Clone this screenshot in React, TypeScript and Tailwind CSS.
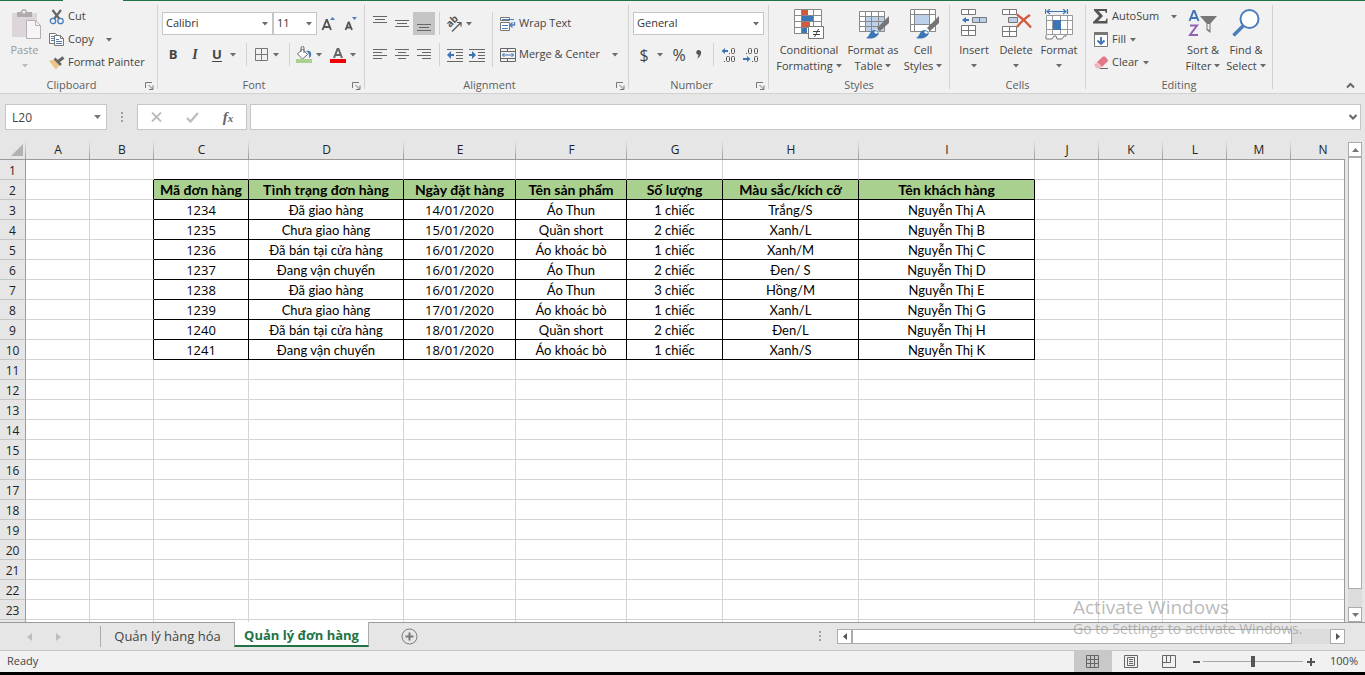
import { useState } from 'react'
import type { ReactNode } from 'react'
import clsx from 'clsx'

/* ── Sheet data ─────────────────────────────────────────────── */

const columns = [
  { name: 'A', width: 64 },
  { name: 'B', width: 64 },
  { name: 'C', width: 95 },
  { name: 'D', width: 155 },
  { name: 'E', width: 112 },
  { name: 'F', width: 111 },
  { name: 'G', width: 96 },
  { name: 'H', width: 136 },
  { name: 'I', width: 176 },
  { name: 'J', width: 64 },
  { name: 'K', width: 64 },
  { name: 'L', width: 64 },
  { name: 'M', width: 64 },
  { name: 'N', width: 64 },
]

const FIRST_COL = 2
const LAST_COL = 8
const FIRST_ROW = 2
const ROW_COUNT = 23

const table = [
  ['Mã đơn hàng', 'Tình trạng đơn hàng', 'Ngày đặt hàng', 'Tên sản phẩm', 'Số lượng', 'Màu sắc/kích cỡ', 'Tên khách hàng'],
  ['1234', 'Đã giao hàng', '14/01/2020', 'Áo Thun', '1 chiếc', 'Trắng/S', 'Nguyễn Thị A'],
  ['1235', 'Chưa giao hàng', '15/01/2020', 'Quần short', '2 chiếc', 'Xanh/L', 'Nguyễn Thị B'],
  ['1236', 'Đã bán tại cửa hàng', '16/01/2020', 'Áo khoác bò', '1 chiếc', 'Xanh/M', 'Nguyễn Thị C'],
  ['1237', 'Đang vận chuyển', '16/01/2020', 'Áo Thun', '2 chiếc', 'Đen/ S', 'Nguyễn Thị D'],
  ['1238', 'Đã giao hàng', '16/01/2020', 'Áo Thun', '3 chiếc', 'Hồng/M', 'Nguyễn Thị E'],
  ['1239', 'Chưa giao hàng', '17/01/2020', 'Áo khoác bò', '1 chiếc', 'Xanh/L', 'Nguyễn Thị G'],
  ['1240', 'Đã bán tại cửa hàng', '18/01/2020', 'Quần short', '2 chiếc', 'Đen/L', 'Nguyễn Thị H'],
  ['1241', 'Đang vận chuyển', '18/01/2020', 'Áo khoác bò', '1 chiếc', 'Xanh/S', 'Nguyễn Thị K'],
]

const LAST_ROW = FIRST_ROW + table.length - 1

/* ── Small shared pieces ────────────────────────────────────── */

function Caret({ className = 'text-[#6a6a6a]' }: { className?: string }) {
  return (
    <svg width="6" height="4" viewBox="0 0 6 4" className={clsx('shrink-0', className)} aria-hidden>
      <path d="M0 0h6L3 3.500z" fill="currentColor" />
    </svg>
  )
}

function CaretButton({ label }: { label: string }) {
  return (
    <button aria-label={label} className="flex h-full w-3.5 items-center pl-0.5">
      <Caret />
    </button>
  )
}

function Divider() {
  return <div className="mx-1 h-full w-px shrink-0 bg-[#d2d2d2]" />
}

function Group({ title, launcher, className, children }: {
  title: string
  launcher?: boolean
  className?: string
  children: ReactNode
}) {
  return (
    <>
      <section className={clsx('flex shrink-0 flex-col', className)}>
        <div className="flex h-[76px]">{children}</div>
        <div className="flex h-4 items-center">
          <span className="flex-1 text-center leading-4 text-[#5f5f5f]">{title}</span>
          {launcher && (
            <button aria-label={`${title} settings`} className="mr-0.5 flex w-3 justify-center">
              <svg width="9" height="9" viewBox="0 0 9 9" fill="none" stroke="#777" aria-hidden>
                <path d="M.5 7V1.500H7" />
                <path d="M3.500 4l4 4M8 4.500v4H4" />
              </svg>
            </button>
          )}
        </div>
      </section>
      <div className="my-1 w-px shrink-0 bg-[#d2d2d2]" />
    </>
  )
}

function IconButton({ label, active, wide, children }: {
  label: string
  active?: boolean
  wide?: boolean
  children: ReactNode
}) {
  return (
    <button
      aria-label={label}
      className={clsx(
        'flex h-[23px] shrink-0 items-center justify-center',
        wide ? 'w-[22px]' : 'w-5',
        active && 'bg-[#c5c5c5]',
      )}
    >
      {children}
    </button>
  )
}

function TextButton({ icon, label, caret, far }: { icon: ReactNode; label: string; caret?: boolean; far?: boolean }) {
  return (
    <button className="flex h-[23px] items-center whitespace-nowrap">
      <span className="mr-[3px] flex w-4 justify-center">{icon}</span>
      {label}
      {caret && <Caret className={clsx('text-[#6a6a6a]', far ? 'ml-3' : 'ml-1')} />}
    </button>
  )
}

function BigButton({ icon, lines, className, disabled }: {
  icon: ReactNode
  lines: string[]
  className?: string
  disabled?: boolean
}) {
  return (
    <button
      disabled={disabled}
      className={clsx(
        'flex shrink-0 flex-col items-center pt-2 leading-4 whitespace-nowrap',
        disabled && 'text-[#999]',
        className,
      )}
    >
      <span className="flex h-[33px] items-start">{icon}</span>
      <span>{lines[0]}</span>
      <span className="flex h-4 items-center gap-[3px]">
        {lines[1]}
        <Caret className={disabled ? 'text-[#bdbdbd]' : 'text-[#6a6a6a]'} />
      </span>
    </button>
  )
}

function Combo({ label, value, className }: { label: string; value: string; className: string }) {
  return (
    <div className={clsx('relative h-[23px] shrink-0', className)}>
      <select
        aria-label={label}
        defaultValue={value}
        className="h-full w-full appearance-none border border-[#c6c6c6] bg-white pl-[3px] text-[#333] outline-none"
      >
        <option>{value}</option>
      </select>
      <span className="pointer-events-none absolute inset-y-0 right-[5px] flex items-center">
        <Caret />
      </span>
    </div>
  )
}

/* ── Icons ──────────────────────────────────────────────────── */

const PasteIcon = () => (
  <svg width="33" height="31" viewBox="-4 0 33 31" aria-hidden>
    <path d="M0 4h25v24H0z" fill="#dcd6da" />
    <path d="M5 3h4c0-4 6-4 6 0h5v5H5z" fill="#b0abae" />
    <circle cx="12" cy="3" r="1.500" fill="#f1f1f1" />
    <path d="M14.500 11.500h9l5 5v13h-14z" fill="#f7f4f7" stroke="#b5b0b4" />
    <path d="M23.500 11.500v5h5" fill="none" stroke="#b5b0b4" />
  </svg>
)

const CutIcon = () => (
  <svg width="16" height="16" viewBox="0 0 16 16" fill="none" aria-hidden>
    <path d="M3.500 1l7 9M12 1L5 10" stroke="#666" strokeWidth="2.200" />
    <circle cx="4" cy="12" r="2.700" stroke="#4a7ebb" strokeWidth="1.300" />
    <circle cx="11.500" cy="12" r="2.700" stroke="#4a7ebb" strokeWidth="1.300" />
  </svg>
)

const CopyIcon = () => (
  <svg width="16" height="15" viewBox="0 0 16 15" aria-hidden>
    <path d="M.5 1.500h6l2 2v8h-8z" fill="#fff" stroke="#777" />
    <path d="M2 4.500h4M2 6.500h3M2 8.500h3" stroke="#4a7ebb" />
    <path d="M5.500 3.500h6l3 3v7h-9z" fill="#fff" stroke="#777" />
    <path d="M11.500 3.500v3h3" fill="none" stroke="#777" />
    <path d="M7 7.500h3M7 9.500h6M7 11.500h6" stroke="#4a7ebb" />
  </svg>
)

const PainterIcon = () => (
  <svg width="16" height="14" viewBox="0 0 16 14" aria-hidden>
    <path d="M0 5l5-1.500L10.500 9 7 13.500z" fill="#ecc585" />
    <path d="M5.500 2.500l6.500 6.500" stroke="#666" strokeWidth="2.500" />
    <path d="M9 5.500l5.500-4" stroke="#666" strokeWidth="3" />
  </svg>
)

const FontSizeIcon = ({ up }: { up?: boolean }) => (
  <svg width="15" height="16" viewBox="0 0 15 16" aria-hidden>
    {up ? (
      <path d="M1.500 14L5.500 4h.5l4 10M3 11h5.500" fill="none" stroke="#555" strokeWidth="1.900" />
    ) : (
      <path d="M2.500 14L5.500 6.500h.5L9 14M3.500 11.500H8" fill="none" stroke="#555" strokeWidth="1.800" />
    )}
    <path d={up ? 'M9 4l2.500-3L14 4z' : 'M9 1h5l-2.500 3z'} fill="#4a7ebb" />
  </svg>
)

const BordersIcon = () => (
  <svg width="13" height="13" viewBox="0 0 13 13" fill="none" stroke="#777" aria-hidden>
    <path d="M.5.5h12v12H.5zM6.500.5v12M.5 6.500h12" />
  </svg>
)

const FillColorIcon = () => (
  <svg width="18" height="17" viewBox="0 0 18 17" aria-hidden>
    <path d="M7.500 3l5 5.500-5 4.500-5-5z" fill="#fff" stroke="#666" />
    <path d="M6 6V2a1.500 1.500 0 0 1 3 0v5" fill="none" stroke="#666" />
    <path d="M11 5c4-1 6 1 5 5-.5 1.500-2 2-2 2 .5-3 0-5-3-7z" fill="#4a7ebb" />
    <path d="M1 13h16v4H1z" fill="#a9d08e" />
  </svg>
)

const FontColorIcon = () => (
  <svg width="16" height="17" viewBox="0 0 16 17" aria-hidden>
    <path d="M4 12l3.500-9h1L12 12M5 9h6" fill="none" stroke="#666" strokeWidth="2" />
    <path d="M0 13h16v4H0z" fill="#f00000" />
  </svg>
)

function LinesIcon({ d }: { d: string }) {
  return (
    <svg width="14" height="15" viewBox="0 0 14 15" stroke="#666" aria-hidden>
      <path d={d} />
    </svg>
  )
}

const OrientationIcon = () => (
  <svg width="20" height="21" viewBox="0 0 20 21" aria-hidden>
    <text x="6" y="15" fontSize="10" fontWeight="700" fill="#555" transform="rotate(-45 6 15)">ab</text>
    <path d="M8 18.500L17 9.500M13 9.500h4v4" fill="none" stroke="#555" strokeWidth="1.200" />
  </svg>
)

const IndentIcon = ({ flip }: { flip?: boolean }) => (
  <svg width="16" height="14" viewBox="0 0 16 14" aria-hidden>
    <path d="M0 1.500h16M9 4.500h7M9 7.500h7M9 10.500h7M0 13.500h16" stroke="#666" />
    <path
      d={flip ? 'M0 6h3V3l4 4-4 4V8H0z' : 'M7 6H4V3L0 7l4 4V8h3z'}
      fill="#3c76b5"
    />
  </svg>
)

const WrapIcon = () => (
  <svg width="16" height="16" viewBox="0 0 16 16" fill="none" aria-hidden>
    <path d="M.5 1.500h9v3h-9zM.5 6.500h9v8h-9z" fill="#fff" stroke="#777" />
    <path d="M2 3.500h12M2 9.500h6M2 12.500h6" stroke="#4a7ebb" />
    <path d="M14.500 6v3h-4M12.500 6.500L10 9l2.500 2.500" stroke="#4a7ebb" strokeWidth="1.300" />
  </svg>
)

const MergeIcon = () => (
  <svg width="16" height="16" viewBox="0 0 16 16" fill="none" aria-hidden>
    <path d="M.5 1.500h15v13H.5zM.5 4.500h15M.5 11.500h15M7.500 1v3M7.500 12v2" stroke="#666" />
    <path d="M2.500 8h11M4.500 6L2.500 8l2 2M11.500 6l2 2-2 2" stroke="#3c76b5" />
  </svg>
)

const DecimalIcon = ({ less }: { less?: boolean }) => (
  <svg width="16" height="16" viewBox="0 0 16 16" aria-hidden>
    <g fill="none" stroke="#555">
      {less ? (
        <>
          <rect x="5.500" y="1.500" width="3" height="5" rx="1" />
          <rect x="11.500" y="1.500" width="3" height="5" rx="1" />
          <rect x="11.500" y="9.500" width="3" height="5" rx="1" />
          <path d="M3 6.500h1M9 14.500h1" />
        </>
      ) : (
        <>
          <rect x="10.500" y="1.500" width="3" height="5" rx="1" />
          <rect x="5.500" y="9.500" width="3" height="5" rx="1" />
          <rect x="10.500" y="9.500" width="3" height="5" rx="1" />
          <path d="M8 6.500h1M3 14.500h1" />
        </>
      )}
    </g>
    <path d={less ? 'M0 11h4V9l3.500 3L4 15v-2H0z' : 'M7 3H4V1L.5 4 4 7V5h3z'} fill="#3c76b5" />
  </svg>
)

const ConditionalIcon = () => (
  <svg width="30" height="30" viewBox="0 0 30 30" aria-hidden>
    <path d="M.5.5h27v24H.5z" fill="#fff" />
    <path d="M8 1h6v5H8zM8 13h8v5H8z" fill="#d2593e" />
    <path d="M8 7h11v5H8zM8 19h5v5H8z" fill="#3c76b5" />
    <path d="M.5.5h27v24H.5zM7.500 0v24M19.500 0v24M0 6.500h27M0 12.500h27M0 18.500h27" fill="none" stroke="#888" />
    <path d="M14.500 17.500h15v12h-15z" fill="#fff" stroke="#777" />
    <path d="M19 22.500h7M19 25.500h7M24.500 20l-4 8" stroke="#444" fill="none" />
  </svg>
)

const BrushShape = () => (
  <>
    <path d="M30 7v7l-9 8-3-3z" fill="#757575" />
    <path d="M17 20l3.500 3.500-2 1.500-3-3.500z" fill="#fff" />
    <path d="M7 29c4-1 3-8 9-8 4 1 5 4 2 6-3 3-8 3-11 2z" fill="#3c76b5" />
    <path d="M15 23c1-1 3-1 4 1-1 1-3 1-4-1z" fill="#fff" />
  </>
)

const TableStyleIcon = () => (
  <svg width="32" height="31" viewBox="-2 0 32 31" aria-hidden>
    <path d="M.5 2.500h25v20H.5z" fill="#fff" />
    <path d="M7 8h18v14H7z" fill="#bdd0e9" />
    <path d="M.5 2.500h25v20H.5zM6.500 2v20M12.500 2v20M19.500 2v20M0 7.500h25M0 12.500h25M0 17.500h25" fill="none" stroke="#888" />
    <BrushShape />
  </svg>
)

const CellStyleIcon = () => (
  <svg width="32" height="31" viewBox="-2 0 32 31" aria-hidden>
    <path d="M1.500.5h25v22h-25z" fill="#fff" />
    <path d="M6 6h15v9H6z" fill="#bdd0e9" />
    <path d="M1.500.5h25v22h-25zM5.500 0v22M20.500 0v22M1 5.500h25M1 15.500h25" fill="none" stroke="#888" />
    <BrushShape />
  </svg>
)

const InsertIcon = () => (
  <svg width="27" height="28" viewBox="0 0 27 28" aria-hidden>
    <path d="M.5.5h14v5H.5zM.5 16.500h14v10H.5zM7.500.5v5M7.500 16.500v10M.5 21.500h14" fill="#fff" stroke="#777" />
    <path d="M11.500 8.500h14v5h-14zM18.500 8.500v5" fill="#bdd0e9" stroke="#777" />
    <path d="M8 10H5V8l-4 3 4 3v-2h3z" fill="#3c76b5" />
  </svg>
)

const DeleteIcon = () => (
  <svg width="32" height="28" viewBox="-2 0 32 28" aria-hidden>
    <path d="M.5.5h14v5H.5zM.5 17.500h14v10H.5zM7.500.5v5M7.500 17.500v10M.5 22.500h14" fill="#fff" stroke="#777" />
    <path d="M6.500 8.500h9v5h-9z" fill="#bdd0e9" stroke="#777" />
    <path d="M15 5.500c4 3 9 7 14 13M28 6c-5 3-9 7-13 12" fill="none" stroke="#d2593e" strokeWidth="2.200" />
  </svg>
)

const FormatIcon = () => (
  <svg width="29" height="31" viewBox="0 0 29 31" aria-hidden>
    <path d="M.5 0v5M22.500 0v5M2 2.500h19M5 0L2 2.500 5 5M18 0l3 2.500L18 5" fill="none" stroke="#3c76b5" strokeWidth="1.200" />
    <path d="M1.500 6.500h26v19h-26z" fill="#fff" />
    <path d="M1.500 6.500h26v19h-26zM7.500 6v20M15.500 6v20M22.500 6v20M1 11.500h26M1 20.500h26" fill="none" stroke="#999" />
    <path d="M8 11h8v10H8z" fill="#3c76b5" />
    <path d="M1 26v4h6l2-3h2l1 3h5l2-3h2v-1" fill="#fff" stroke="#777" />
  </svg>
)

const SumIcon = () => (
  <svg width="16" height="16" viewBox="0 0 16 16" aria-hidden>
    <path d="M1 0h13v4h-1l-1-2H5.500L10 7l-5 5h7.500l1-2.500h1V14.500H0V13l6-6-5-5.500z" fill="#555" />
  </svg>
)

const FillDownIcon = () => (
  <svg width="15" height="16" viewBox="0 0 15 16" aria-hidden>
    <path d="M.5 1.500h13v13H.5z" fill="#fff" stroke="#777" />
    <path d="M0 0h14v3H0z" fill="#777" />
    <path d="M7 5v7M3.500 8.500L7 12l3.500-3.500" fill="none" stroke="#3c76b5" strokeWidth="1.900" />
  </svg>
)

const EraserIcon = () => (
  <svg width="15" height="14" viewBox="0 0 15 14" aria-hidden>
    <path d="M3 6l6-5.500h2L14 4v1l-6 6z" fill="#e4788a" />
    <path d="M2.500 6.500L7.500 11l-2 1.500H3L.5 10V8.500z" fill="#f0b4be" />
    <path d="M6 12.500h8" stroke="#666" />
  </svg>
)

const SortFilterIcon = () => (
  <svg width="30" height="29" viewBox="0 0 30 29" fill="none" aria-hidden>
    <path d="M1.500 12L5.500 2h1l4 10M3 9h6.500" stroke="#3c76b5" strokeWidth="2" />
    <path d="M2 16.500h7L2 26h8" stroke="#9263b5" strokeWidth="2" />
    <path d="M12 7h17l-6.500 7.500V24l-4-3v-6.500z" fill="#777" />
    <path d="M19.500 15h2v6l-2-1z" fill="#f1f1f1" />
  </svg>
)

const FindIcon = () => (
  <svg width="28" height="28" viewBox="0 0 28 28" fill="none" stroke="#4a7ebb" aria-hidden>
    <path d="M11 17L1.500 26.500" strokeWidth="3.500" />
    <circle cx="17.500" cy="10" r="9" fill="#fff" strokeWidth="2" />
  </svg>
)

/* ── Ribbon ─────────────────────────────────────────────────── */

function Ribbon() {
  return (
    <header className="flex shrink-0 flex-col border-b border-[#d2d2d2] bg-[#f1f1f1]">
      <div className="flex h-px">
        <div className="w-[63px] bg-[#217346]" />
        <div className="w-[60px]" />
        <div className="flex-1 bg-[#217346]" />
      </div>
      <div className="flex text-[#444]">
        <Group title="Clipboard" launcher className="w-[157px]">
          <BigButton disabled icon={<PasteIcon />} lines={['Paste', '']} className="w-[49px]" />
          <div className="flex flex-col pt-1">
            <TextButton icon={<CutIcon />} label="Cut" />
            <TextButton icon={<CopyIcon />} label="Copy" caret far />
            <TextButton icon={<PainterIcon />} label="Format Painter" />
          </div>
        </Group>

        <Group title="Font" launcher className="w-[206px]">
          <div className="flex flex-col gap-2 pt-[11px] pl-1">
            <div className="flex h-[23px]">
              <Combo label="Font name" value="Calibri" className="w-[111px]" />
              <Combo label="Font size" value="11" className="w-11" />
              <div className="flex">
                <IconButton wide label="Increase font size"><FontSizeIcon up /></IconButton>
                <IconButton wide label="Decrease font size"><FontSizeIcon /></IconButton>
              </div>
            </div>
            <div className="flex h-[23px] items-center text-[13px]">
              <IconButton wide label="Bold"><b>B</b></IconButton>
              <IconButton wide label="Italic">
                <i className="font-['Liberation_Serif',serif] text-sm font-bold">I</i>
              </IconButton>
              <IconButton wide label="Underline"><b className="underline underline-offset-2">U</b></IconButton>
              <CaretButton label="Underline options" />
              <Divider />
              <IconButton label="Borders"><BordersIcon /></IconButton>
              <CaretButton label="Border options" />
              <Divider />
              <IconButton label="Fill color"><FillColorIcon /></IconButton>
              <CaretButton label="Fill color options" />
              <IconButton label="Font color"><FontColorIcon /></IconButton>
              <CaretButton label="Font color options" />
            </div>
          </div>
        </Group>

        <Group title="Alignment" launcher className="w-[263px]">
          <div className="flex flex-col gap-2 pt-[11px] pl-1">
            <div className="flex h-[23px]">
              <IconButton wide label="Top align"><LinesIcon d="M0 .5h14M2 3.500h10M0 6.500h14" /></IconButton>
              <IconButton wide label="Middle align"><LinesIcon d="M0 4.500h14M2 7.500h10M0 10.500h14" /></IconButton>
              <IconButton wide active label="Bottom align"><LinesIcon d="M0 8.500h14M2 11.500h10M0 14.500h14" /></IconButton>
              <Divider />
              <IconButton label="Orientation"><OrientationIcon /></IconButton>
              <CaretButton label="Orientation options" />
            </div>
            <div className="flex h-[23px]">
              <IconButton wide label="Align left"><LinesIcon d="M0 2.500h14M0 5.500h9M0 8.500h14M0 11.500h9" /></IconButton>
              <IconButton wide label="Center"><LinesIcon d="M0 2.500h14M3 5.500h8M0 8.500h14M3 11.500h8" /></IconButton>
              <IconButton wide label="Align right"><LinesIcon d="M0 2.500h14M5 5.500h9M0 8.500h14M5 11.500h9" /></IconButton>
              <Divider />
              <IconButton wide label="Decrease indent"><IndentIcon /></IconButton>
              <IconButton wide label="Increase indent"><IndentIcon flip /></IconButton>
            </div>
          </div>
          <div className="flex pt-[11px] pb-2.5">
            <Divider />
            <div className="flex flex-col gap-2 pl-[3px]">
              <TextButton icon={<WrapIcon />} label="Wrap Text" />
              <TextButton icon={<MergeIcon />} label="Merge & Center" caret far />
            </div>
          </div>
        </Group>

        <Group title="Number" launcher className="w-[139px]">
          <div className="flex flex-col gap-2 pt-[11px] pl-1">
            <Combo label="Number format" value="General" className="w-[131px]" />
            <div className="flex h-[23px] text-base">
              <IconButton wide label="Currency">$</IconButton>
              <CaretButton label="Currency options" />
              <IconButton label="Percent">%</IconButton>
              <IconButton label="Comma style">
                <svg width="6" height="9" viewBox="0 0 6 9" aria-hidden>
                  <path d="M2.500 0C4.500 0 5.500 1.500 5 3.500 4.500 6 3 8 1 8.500c1-1.500 1.500-2.500 1.500-3.500C-.5 4.500-.5 0 2.500 0z" fill="#555" />
                </svg>
              </IconButton>
              <Divider />
              <IconButton wide label="Increase decimal"><DecimalIcon /></IconButton>
              <IconButton wide label="Decrease decimal"><DecimalIcon less /></IconButton>
            </div>
          </div>
        </Group>

        <Group title="Styles" className="w-[180px]">
          <div className="flex pl-1">
            <BigButton icon={<ConditionalIcon />} lines={['Conditional', 'Formatting']} className="w-[72px]" />
            <BigButton icon={<TableStyleIcon />} lines={['Format as', 'Table']} className="w-14" />
            <BigButton icon={<CellStyleIcon />} lines={['Cell', 'Styles']} className="w-11" />
          </div>
        </Group>

        <Group title="Cells" className="w-[135px]">
          <div className="flex pl-1">
            <BigButton icon={<InsertIcon />} lines={['Insert', '']} className="w-10" />
            <BigButton icon={<DeleteIcon />} lines={['Delete', '']} className="w-11" />
            <BigButton icon={<FormatIcon />} lines={['Format', '']} className="w-[42px]" />
          </div>
        </Group>

        <Group title="Editing" className="w-[186px]">
          <div className="flex w-24 flex-col pt-1 pl-[7px]">
            <TextButton icon={<SumIcon />} label="AutoSum" caret far />
            <TextButton icon={<FillDownIcon />} label="Fill" caret />
            <TextButton icon={<EraserIcon />} label="Clear" caret />
          </div>
          <BigButton icon={<SortFilterIcon />} lines={['Sort &', 'Filter']} className="w-[42px]" />
          <BigButton icon={<FindIcon />} lines={['Find &', 'Select']} className="w-11" />
        </Group>

        <button aria-label="Collapse the ribbon" className="mr-2.5 mb-1 ml-auto self-end">
          <svg width="9" height="7" viewBox="0 0 9 7" fill="none" stroke="#666" strokeWidth="2" aria-hidden>
            <path d="M1 5.500l3.500-3.500L8 5.500" />
          </svg>
        </button>
      </div>
    </header>
  )
}

/* ── Formula bar ────────────────────────────────────────────── */

function Dots() {
  return (
    <svg width="2" height="11" viewBox="0 0 2 11" fill="#a0a0a0" aria-hidden>
      <path d="M0 0h2v2H0zM0 4h2v2H0zM0 8h2v2H0z" />
    </svg>
  )
}

function FormulaBar() {
  return (
    <div className="flex h-[46px] shrink-0 items-start pt-2.5 pr-1 pl-[5px]">
      <div className="relative h-[26px] w-[102px]">
        <input
          aria-label="Name box"
          defaultValue="L20"
          className="h-full w-full border border-[#c6c6c6] bg-white pl-1.5 text-xs text-[#444] outline-none"
        />
        <button aria-label="Cell names" className="absolute inset-y-0 right-1.5 flex items-center">
          <svg width="7" height="4" viewBox="0 0 7 4" aria-hidden><path d="M0 0h7L3.500 4z" fill="#777" /></svg>
        </button>
      </div>
      <div className="flex h-[26px] w-[30px] items-center justify-center"><Dots /></div>
      <div className="flex h-[26px] w-[110px] items-center border border-[#c6c6c6] bg-white">
        <button aria-label="Cancel" className="flex h-full w-9 items-center justify-center">
          <svg width="11" height="10" viewBox="0 0 11 10" stroke="#bbb" strokeWidth="1.800" aria-hidden>
            <path d="M1 .5l9 9M10 .5l-9 9" />
          </svg>
        </button>
        <button aria-label="Enter" className="flex h-full w-9 items-center justify-center">
          <svg width="13" height="11" viewBox="0 0 13 11" fill="none" stroke="#bbb" strokeWidth="2.200" aria-hidden>
            <path d="M1 6l3.500 3.500L12 1" />
          </svg>
        </button>
        <button
          aria-label="Insert function"
          className="h-full w-9 font-['Liberation_Serif',serif] text-[15px] leading-5 font-bold text-[#666] italic"
        >
          f<span className="text-[11px]">x</span>
        </button>
      </div>
      <div className="relative ml-[3px] h-[26px] flex-1">
        <input aria-label="Formula" className="h-full w-full border border-[#c6c6c6] bg-white px-2 outline-none" />
        <button aria-label="Expand formula bar" className="absolute inset-y-0 right-1 flex items-center">
          <svg width="8" height="6" viewBox="0 0 8 6" fill="none" stroke="#666" strokeWidth="2" aria-hidden>
            <path d="M.5 1L4 4.500 7.500 1" />
          </svg>
        </button>
      </div>
    </div>
  )
}

/* ── Grid ───────────────────────────────────────────────────── */

function cellClass(row: number, col: number) {
  const inRows = row >= FIRST_ROW && row <= LAST_ROW
  const inCols = col >= FIRST_COL && col <= LAST_COL
  const blackRight = inRows && col >= FIRST_COL - 1 && col <= LAST_COL
  const blackBottom = inCols && row >= FIRST_ROW - 1 && row <= LAST_ROW
  const title = row === FIRST_ROW && inCols
  const numeric = !title && (col === 2 || col === 4)

  return clsx(
    'h-5 overflow-hidden border-r border-b px-0 text-center leading-[17px] whitespace-nowrap',
    blackRight ? 'border-r-black' : 'border-r-[#d4d4d4]',
    blackBottom ? 'border-b-black' : 'border-b-[#d4d4d4]',
    title ? 'bg-[#a9d08e] py-px text-sm leading-[17px] font-bold' : 'bg-white pt-0.5 pb-0',
    numeric && "font-['Open_Sans',sans-serif]",
  )
}

const headLine = 'bg-[linear-gradient(to_bottom,#e6e6e6,#9b9b9b)] bg-[length:1px_100%] bg-right bg-no-repeat'

function Grid() {
  return (
    <div className="min-w-0 flex-1 overflow-hidden">
      <table className="w-0 table-fixed border-separate border-spacing-0 font-['Lato',sans-serif] text-[13px] text-black">
        <colgroup>
          <col className="w-[26px]" />
          {columns.map((c) => <col key={c.name} style={{ width: c.width }} />)}
        </colgroup>
        <thead>
          <tr className="font-['Open_Sans',sans-serif] text-xs leading-[19px] text-[#222]">
            <th className={clsx('h-5 border-b border-[#9b9b9b] p-0', headLine)}>
              <svg width="12" height="12" viewBox="0 0 12 12" className="ml-auto mr-[3px]" aria-hidden>
                <path d="M12 0v12H0z" fill="#b2b2b2" />
              </svg>
            </th>
            {columns.map((c) => (
              <th key={c.name} scope="col" className={clsx('h-5 border-b border-[#9b9b9b] p-0 text-center font-normal', headLine)}>
                {c.name}
              </th>
            ))}
          </tr>
        </thead>
        <tbody>
          {Array.from({ length: ROW_COUNT }, (_, i) => i + 1).map((row) => (
            <tr key={row}>
              <th
                scope="row"
                className="h-5 border-r border-b border-r-[#9b9b9b] border-b-[#c4c4c4] bg-[#e6e6e6] px-0 pt-0.5 pb-0 text-center font-['Open_Sans',sans-serif] text-xs leading-[17px] font-normal text-[#222]"
              >
                {row}
              </th>
              {columns.map((c, col) => (
                <td key={c.name} className={cellClass(row, col)}>
                  {table[row - FIRST_ROW]?.[col - FIRST_COL]}
                </td>
              ))}
            </tr>
          ))}
          {/* top sliver of the next row */}
          <tr aria-hidden>
            <td className="h-5 border-r border-[#9b9b9b] bg-[#e6e6e6] p-0" />
            {columns.map((c) => <td key={c.name} className="border-r border-[#d4d4d4] bg-white p-0" />)}
          </tr>
        </tbody>
      </table>
    </div>
  )
}

const scrollBox = 'flex shrink-0 items-center justify-center border border-[#ababab] bg-white'

function VerticalScroll() {
  return (
    <>
      <div className="mt-[19px] w-px bg-[#9b9b9b]" />
      <div className="flex w-5 flex-col px-[3px] pt-0.5">
        <button aria-label="Scroll up" className={clsx(scrollBox, 'h-[15px]')}>
          <svg width="7" height="4" viewBox="0 0 7 4" aria-hidden><path d="M0 4h7L3.500 0z" fill="#777" /></svg>
        </button>
        <div className="flex min-h-0 flex-1 flex-col bg-[#dcdcdc]">
          <div className="h-[96%] border border-[#ababab] bg-white" />
        </div>
        <button aria-label="Scroll down" className={clsx(scrollBox, 'h-[15px]')}>
          <svg width="7" height="4" viewBox="0 0 7 4" aria-hidden><path d="M0 0h7L3.500 4z" fill="#777" /></svg>
        </button>
      </div>
    </>
  )
}

/* ── Sheet tabs and status bar ──────────────────────────────── */

const sheets = ['Quản lý hàng hóa', 'Quản lý đơn hàng']

function SheetTabs() {
  const [active, setActive] = useState(1)

  return (
    <div className="flex h-7 shrink-0 border-t border-[#9b9b9b]">
      <div className="flex w-[100px] items-center gap-6 pl-[27px]">
        <button aria-label="Previous sheet">
          <svg width="5" height="8" viewBox="0 0 5 8" aria-hidden><path d="M5 0v8L0 4z" fill="#bdbdbd" /></svg>
        </button>
        <button aria-label="Next sheet">
          <svg width="5" height="8" viewBox="0 0 5 8" aria-hidden><path d="M0 0v8l5-4z" fill="#bdbdbd" /></svg>
        </button>
      </div>
      <div className="my-[3px] w-px bg-[#ababab]" />
      {sheets.map((name, i) => (
        <button
          key={name}
          onClick={() => setActive(i)}
          className={clsx(
            'h-[25px] shrink-0 text-[13px] leading-5 whitespace-nowrap',
            i === active
              ? '-mt-px w-[135px] border-x border-b-2 border-x-[#ababab] border-b-[#217346] bg-white pt-[3px] font-bold text-[#217346]'
              : 'w-[133px] text-[#444]',
          )}
        >
          {name}
        </button>
      ))}
      <button aria-label="New sheet" className="ml-8 flex h-[26px] items-center">
        <svg width="17" height="17" viewBox="0 0 17 17" fill="none" stroke="#777" aria-hidden>
          <circle cx="8.500" cy="8.500" r="7.500" />
          <path d="M8.500 4.500v8M4.500 8.500h8" strokeWidth="2" />
        </svg>
      </button>
      <div className="ml-auto flex h-[26px] w-[546px] items-center">
        <Dots />
        <button aria-label="Scroll left" className={clsx(scrollBox, 'ml-4 h-[15px] w-[15px]')}>
          <svg width="4" height="7" viewBox="0 0 4 7" aria-hidden><path d="M4 0v7L0 3.500z" fill="#555" /></svg>
        </button>
        <div className="flex h-[15px] flex-1 bg-[#dcdcdc]">
          <div className="w-[92%] border border-[#ababab] bg-white" />
        </div>
        <button aria-label="Scroll right" className={clsx(scrollBox, 'mr-5 h-[15px] w-[15px]')}>
          <svg width="4" height="7" viewBox="0 0 4 7" aria-hidden><path d="M0 0v7l4-3.500z" fill="#555" /></svg>
        </button>
      </div>
    </div>
  )
}

const views = [
  { name: 'Normal', d: 'M.5.5h12v12H.5zM4.500 0v13M8.500 0v13M0 4.500h13M0 8.500h13' },
  { name: 'Page layout', d: 'M.5.5h13v12H.5zM3.500 2.500h7v8h-7zM5 4.500h4M5 6.500h4M5 8.500h4' },
  { name: 'Page break preview', d: 'M.5.5h13v12H.5zM.5 7.500h8V.5M4.500.5v7' },
]

function StatusBar() {
  const [zoom, setZoom] = useState(50)

  return (
    <footer className="flex h-[22px] shrink-0 items-center border-t border-[#c6c6c6] bg-[#f1f1f1] pl-[7px] text-[#444]">
      <span>Ready</span>
      <div className="ml-auto flex h-full">
        {views.map((v, i) => (
          <button
            key={v.name}
            aria-label={v.name}
            className={clsx('flex h-full w-[38px] items-center justify-center', i === 0 && 'bg-[#c8c8c8]')}
          >
            <svg width="14" height="13" viewBox="0 0 14 13" fill="none" stroke="#666" aria-hidden>
              <path d={v.d} />
            </svg>
          </button>
        ))}
      </div>
      <button aria-label="Zoom out" className="ml-0.5 flex w-3 justify-center">
        <svg width="7" height="2" aria-hidden><path d="M0 0h7v2H0z" fill="#555" /></svg>
      </button>
      <input
        type="range"
        aria-label="Zoom"
        value={zoom}
        onChange={(e) => setZoom(Number(e.target.value))}
        className="ml-px h-3 w-[100px] appearance-none bg-[linear-gradient(#a6a6a6,#a6a6a6)] bg-[length:100%_1px] bg-center bg-no-repeat [&::-webkit-slider-thumb]:h-[11px] [&::-webkit-slider-thumb]:w-1 [&::-webkit-slider-thumb]:appearance-none [&::-webkit-slider-thumb]:bg-[#555]"
      />
      <button aria-label="Zoom in" className="ml-1 flex w-2 justify-center">
        <svg width="8" height="8" aria-hidden><path d="M3 0h2v3h3v2H5v3H3V5H0V3h3z" fill="#555" /></svg>
      </button>
      <span className="w-[50px] pr-[7px] text-right">100%</span>
    </footer>
  )
}

export default function App() {
  return (
    <div className="relative flex h-screen flex-col overflow-hidden bg-[#e6e6e6] font-['Open_Sans',sans-serif] text-[11px]">
      <Ribbon />
      <FormulaBar />
      <main className="flex min-h-0 flex-1">
        <Grid />
        <VerticalScroll />
      </main>
      <SheetTabs />
      <StatusBar />
      <div className="h-[3px] shrink-0 bg-black" />

      <div className="pointer-events-none absolute right-14 bottom-9 w-[236px] text-[#8a8a8a]/60">
        <p className="text-[19px] leading-6">Activate Windows</p>
        <p className="text-sm leading-5 whitespace-nowrap">Go to Settings to activate Windows.</p>
      </div>
    </div>
  )
}
